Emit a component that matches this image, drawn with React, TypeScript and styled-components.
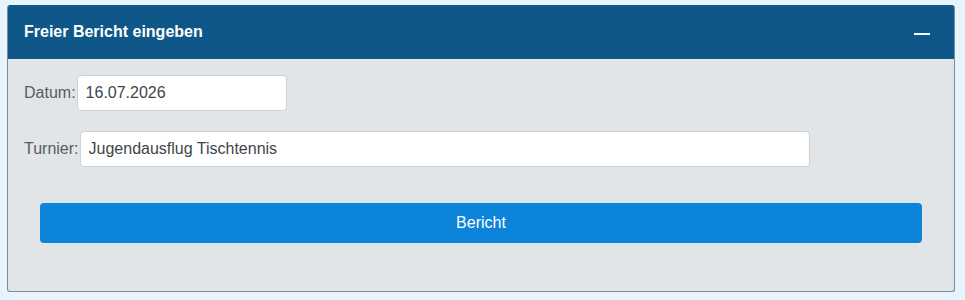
import React from 'react';
import styled, { createGlobalStyle } from 'styled-components';

const GlobalStyle = createGlobalStyle`
  html, body {
    margin: 0;
    padding: 0;
    background: #e8f4fd;
    font-family: "Liberation Sans", Arial, sans-serif;
  }
`;

const Page = styled.div`
  padding: 5px 10px 8px 7px;
`;

const Card = styled.section`
  border: 1px solid #7d8b96;
  border-top: none;
  border-radius: 3px;
  background: #e1e5e8;
  overflow: hidden;
`;

const CardHeader = styled.div`
  display: flex;
  align-items: center;
  justify-content: space-between;
  height: 54px;
  padding: 0 24px 0 16px;
  background: #0f5788;
  color: #fff;
`;

const Title = styled.h3`
  margin: 0;
  font-size: 16px;
  font-weight: bold;
`;

const Collapse = styled.span`
  display: block;
  width: 16px;
  height: 2px;
  margin-top: 4px;
  background: #fff;
`;

const CardBody = styled.div`
  padding: 16px 16px 48px;
`;

const Row = styled.div<{ $last?: boolean }>`
  display: flex;
  align-items: center;
  gap: 1px;
  margin-bottom: ${({ $last }) => ($last ? 0 : 20)}px;
`;

const Label = styled.label`
  font-size: 16px;
  color: #555d63;
`;

const Input = styled.input<{ $width: number }>`
  box-sizing: border-box;
  width: ${({ $width }) => $width}px;
  height: 36px;
  padding: 0 8px;
  border: 1px solid #ccd1d5;
  border-radius: 4px;
  background: #fff;
  font-family: inherit;
  font-size: 16px;
  color: #3f4549;
  outline: none;
`;

const SubmitButton = styled.button`
  display: block;
  box-sizing: border-box;
  width: calc(100% - 32px);
  height: 40px;
  margin: 36px 0 0 16px;
  border: none;
  border-radius: 4px;
  background: #0c84d9;
  color: #fff;
  font-family: inherit;
  font-size: 16px;
`;

const App: React.FC = () => {
  return (
    <>
      <GlobalStyle />
      <Page>
        <Card>
          <CardHeader>
            <Title>Freier Bericht eingeben</Title>
            <Collapse />
          </CardHeader>
          <CardBody>
            <Row>
              <Label>Datum:</Label>
              <Input $width={210} defaultValue="16.07.2026" />
            </Row>
            <Row $last>
              <Label>Turnier:</Label>
              <Input $width={730} defaultValue="Jugendausflug Tischtennis" />
            </Row>
            <SubmitButton>Bericht</SubmitButton>
          </CardBody>
        </Card>
      </Page>
    </>
  );
};

export default App;
